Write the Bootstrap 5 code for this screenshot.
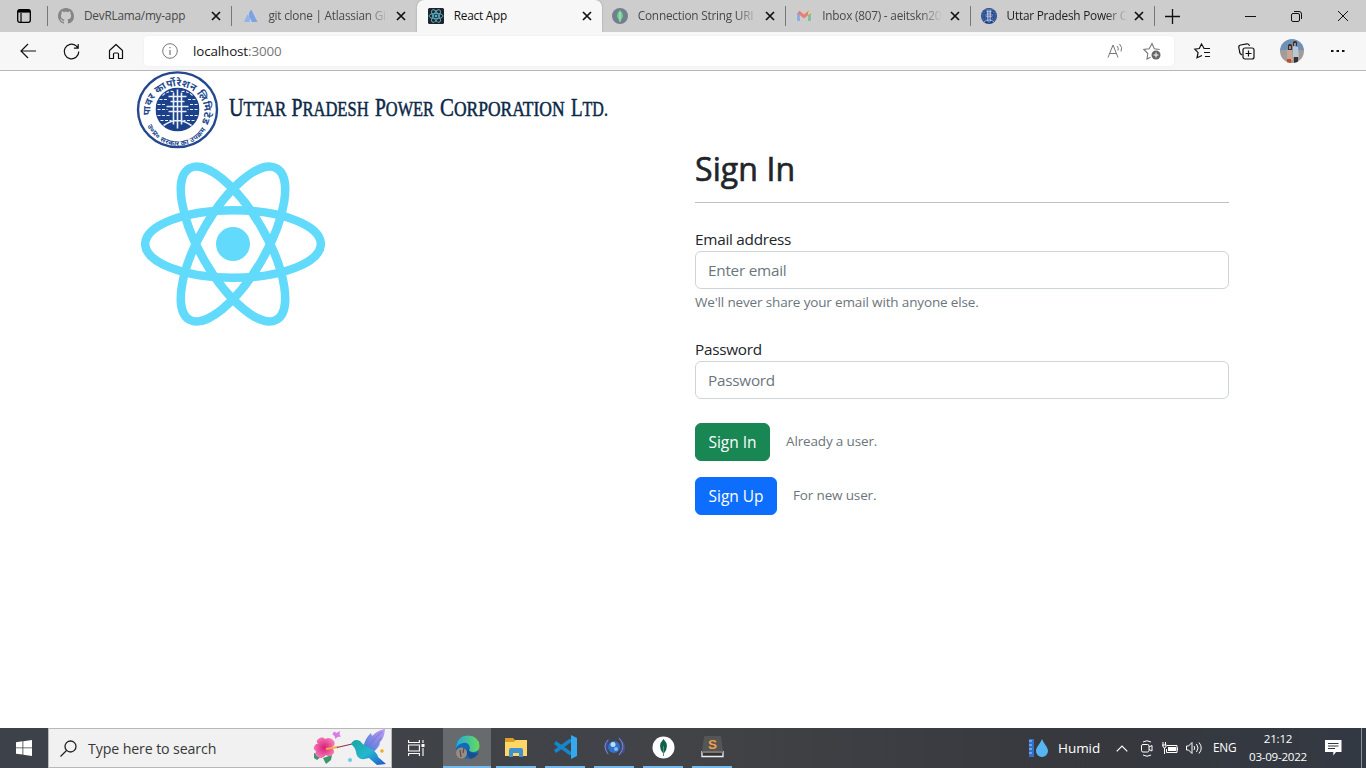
<!DOCTYPE html>
<html lang="en">
<head>
<meta charset="utf-8">
<title>React App</title>
<link href="https://cdn.jsdelivr.net/npm/bootstrap@5.3.0/dist/css/bootstrap.min.css" rel="stylesheet">
<style>
:root{--ui:"Open Sans","Noto Sans",sans-serif}
body{font-family:var(--ui);font-size:15px;height:768px;overflow:hidden;color:#212529;background:#fff}
svg{display:block;flex:none;overflow:visible}
.tabstrip{height:32px;background:#cdcdcd;font-size:11.8px;letter-spacing:-.22px;color:#494949}
.edge-start{width:47px;padding-left:17px;flex:none}
.btab{width:184.4px;flex:none;padding:0 10px 0 10px;border-left:1px solid transparent;position:relative}
.btab::before{content:"";position:absolute;left:-1px;top:6px;height:20px;width:1px;background:#777}
.btab.on::before,.btab.on + .btab::before{display:none}
.btab.on{background:#f7f7f7;color:#111;border-radius:7px 7px 0 0;width:185px;margin-left:1px;margin-right:-1px;box-shadow:0 0 2px #999;clip-path:inset(0 -3px 0 -3px)}
.btab .ttl{white-space:nowrap;overflow:hidden;margin-left:10px;width:120px;flex:none;line-height:20px;padding-bottom:2px}
.btab.fade-end .ttl{-webkit-mask-image:linear-gradient(90deg,#000 82%,transparent 100%)}
.toolbar{height:39px;background:#f7f7f7;border-bottom:1px solid #b8b8b8}
.address{width:1030px;height:30px;background:#fff;border-radius:4px;margin-left:20px;box-shadow:0 0 2px #e8e8e8;font-size:13.4px}
.page{height:657px}
.brand{height:79px}
.form-area h2{font-size:32px;line-height:38px;font-weight:500;letter-spacing:.1px;margin:0;-webkit-text-stroke:.65px}
.form-area hr{margin:14px 0 24px;opacity:.25;border-top:1px solid #000}
.form-area label{display:block;height:23.5px;line-height:24px;font-size:15.3px;letter-spacing:-.26px}
.form-area .form-control{height:38px;font-size:15.3px;letter-spacing:-.25px;border-color:#ced4da}
.form-area .form-control::placeholder{color:#6c757d}
.form-area .hint{font-size:13.5px;letter-spacing:-.15px;color:#6c757d;line-height:21px}
.form-area .btn{height:38px;font-size:15.5px;letter-spacing:-.05px;padding:7px 0 5px}
.b-in{width:75px}.b-up{width:82px}
.taskbar{height:40px;background:linear-gradient(90deg,#3d4149,#414347 50%,#36383d 80%,#333943);color:#fff}
.searchbox{width:344px;height:40px;background:#f1f1f1;border:1px solid #b9b9b9;color:#383838;font-size:14.2px;letter-spacing:-.12px}
.app{width:40px;height:40px;margin-right:9px;border-bottom:2px solid #76b9ed}
.app.current{width:48px;margin-right:5px;background:#686b6d}
.clock{font-size:11.6px;line-height:18px;letter-spacing:-.25px;width:64px}
</style>
</head>
<body>
<svg width="0" height="0" class="position-absolute">
<defs>
<symbol id="x" viewBox="0 0 10 10"><path d="M1 1l8 8M9 1L1 9" stroke="#111" stroke-width="1.7" fill="none"/></symbol>
<symbol id="atom" viewBox="-92 -82 184 164"><g fill="none" stroke="#61dafb" stroke-width="8.5"><ellipse rx="87.800" ry="33.8"/><ellipse rx="87.3" ry="33" transform="rotate(60)"/><ellipse rx="87.3" ry="33" transform="rotate(120)"/></g><circle r="17" fill="#61dafb"/></symbol>
<symbol id="emblem" viewBox="-22 -22 44 44"><circle r="22" fill="#1c418b"/>
<g fill="none" stroke="#e9eef8" stroke-width="1.6"><path d="M0-20V19M-4-17V15M4-17V15M-9-13H9M-7-8H7M-11-3H11M-9 2H9M-14 16q14-10 28 0" /><path stroke-width="1.1" stroke-dasharray="3 1.5" d="M-18-10H-9M-20-5H-11M-20 0H-10M-20 6H-8M-17 11H-6M18-10H9M20-5H11M20 0H10M20 6H8M17 11H6M-15-14q6-5 11-4M15-14q-6-5-11-4"/></g></symbol>
</defs>
</svg>

<header>
<div class="tabstrip d-flex align-items-stretch">
  <div class="edge-start d-flex align-items-center"><svg width="14" height="14" viewBox="0 0 14 14"><rect x=".7" y=".7" width="12.6" height="12.6" rx="2" fill="none" stroke="#000" stroke-width="1.3"/><path d="M1 2.200h12" stroke="#000" stroke-width="2.800"/><path d="M4 4v9" stroke="#000" stroke-width="1.200"/></svg></div>
  <div class="btab d-flex align-items-center"><svg width="16" height="16" viewBox="0 0 16 16"><path fill="#858585" d="M8 0C3.58 0 0 3.58 0 8c0 3.54 2.29 6.53 5.47 7.59.4.07.55-.17.55-.38 0-.19-.01-.82-.01-1.49-2.01.37-2.53-.49-2.69-.94-.09-.23-.48-.94-.82-1.13-.28-.15-.68-.52-.01-.53.63-.01 1.08.58 1.23.82.72 1.21 1.87.87 2.33.66.07-.52.28-.87.51-1.07-1.78-.2-3.64-.89-3.64-3.95 0-.87.31-1.59.82-2.15-.08-.2-.36-1.02.08-2.12 0 0 .67-.21 2.2.82.64-.18 1.32-.27 2-.27s1.36.09 2 .27c1.53-1.04 2.2-.82 2.2-.82.44 1.1.16 1.92.08 2.12.51.56.82 1.27.82 2.15 0 3.07-1.87 3.75-3.65 3.95.29.25.54.73.54 1.48 0 1.07-.01 1.93-.01 2.2 0 .21.15.46.55.38A8 8 0 0 0 16 8c0-4.42-3.58-8-8-8z"/></svg><span class="ttl">DevRLama/my-app</span><svg class="ms-auto" width="10" height="10"><use href="#x"/></svg></div>
  <div class="btab fade-end d-flex align-items-center"><svg width="16" height="16" viewBox="0 0 16 16"><path fill="#92b4e8" d="M6 7Q5.5 6.500 5 7L2 14h5.500Q9 11 6 7z"/><path fill="#78a3e5" d="M8.800 2Q5 7 8.500 11L10 14h5.500L9.500 2Q9.200 1.500 8.800 2z"/></svg><span class="ttl">git clone | Atlassian Gi</span><svg class="ms-auto" width="10" height="10"><use href="#x"/></svg></div>
  <div class="btab on d-flex align-items-center"><svg width="16" height="16" viewBox="0 0 16 16"><rect width="16" height="16" rx="1.500" fill="#20232a"/><g transform="translate(8 8)" fill="none" stroke="#5cb5ca" stroke-width=".9"><ellipse rx="7" ry="2.700"/><ellipse rx="7" ry="2.700" transform="rotate(60)"/><ellipse rx="7" ry="2.700" transform="rotate(120)"/><circle r="1" fill="#61dafb"/></g></svg><span class="ttl">React App</span><svg class="ms-auto" width="10" height="10"><use href="#x"/></svg></div>
  <div class="btab fade-end d-flex align-items-center"><svg width="16" height="16" viewBox="0 0 16 16"><circle cx="8" cy="8" r="8" fill="#71808a"/><path d="M8 2q6 6 0 11q-6-5 0-11z" fill="#6fce94"/><path d="M8 4v10" stroke="#b4e8c5"/></svg><span class="ttl">Connection String URI</span><svg class="ms-auto" width="10" height="10"><use href="#x"/></svg></div>
  <div class="btab fade-end d-flex align-items-center"><svg width="16" height="16" viewBox="0 0 16 16"><path fill="#8caee3" d="M1 5h3v8H2q-1 0-1-1z"/><path fill="#82c29a" d="M12 5h3v7q0 1-1 1h-2z"/><path d="M2.500 4L8 8.500 13.500 4" fill="none" stroke="#e57f78" stroke-width="3"/><path d="M12 4l2-1 1 2-3 2z" fill="#ecd282"/></svg><span class="ttl">Inbox (807) - aeitskn20</span><svg class="ms-auto" width="10" height="10"><use href="#x"/></svg></div>
  <div class="btab fade-end d-flex align-items-center" style="color:#222"><svg width="16" height="16"><use href="#emblem"/></svg><span class="ttl">Uttar Pradesh Power C</span><svg class="ms-auto" width="10" height="10"><use href="#x"/></svg></div>
  <div class="btab d-flex align-items-center" style="width:80px"><svg width="15" height="15"><path d="M7.500 0v15M0 7.500h15" stroke="#111" stroke-width="1.300"/></svg></div>
  <div class="d-flex align-items-center ms-auto" style="gap:35px;padding-right:17px"><svg width="11" height="11"><path d="M0 5.500h11" stroke="#111"/></svg><svg width="11" height="11" viewBox="0 0 11 11" fill="none" stroke="#111"><rect x=".5" y="2.500" width="8" height="8" rx="1.500"/><path d="M3 .5h5q2.500 0 2.500 2.500v5"/></svg><svg width="12" height="12"><path d="M1 1l10 10M11 1L1 11" stroke="#111"/></svg></div>
</div>
<div class="toolbar d-flex align-items-center">
  <svg width="16" height="16" style="margin-left:20px" viewBox="0 0 16 16"><path d="M16 8H1M8 1L1 8l7 7" fill="none" stroke="#111" stroke-width="1.200"/></svg>
  <svg width="17" height="17" style="margin-left:27px;margin-right:1px" viewBox="0 0 17 17"><path d="M15.800 8.500a7.300 7.300 0 1 1-2.600-5.600L15 5M15.200 1v4.200h-4.300" fill="none" stroke="#111" stroke-width="1.200"/></svg>
  <svg width="16" height="17" style="margin-left:27px" viewBox="0 0 16 17"><path d="M1.500 7.500L8 1.500l6.500 6v8h-4v-4.500q0-1-1-1h-3q-1 0-1 1v4.500h-4z" fill="none" stroke="#111" stroke-width="1.200" stroke-linejoin="round"/></svg>
  <div class="address d-flex align-items-center">
    <svg width="16" height="16" style="margin-left:18px" viewBox="0 0 16 16"><circle cx="8" cy="8" r="7.300" fill="none" stroke="#777"/><path d="M8 7v5M8 4v1.300" stroke="#777" stroke-width="1.200"/></svg>
    <span style="margin-left:15px;color:#151515;letter-spacing:-.12px">localhost<span style="color:#777">:3000</span></span>
    <svg class="ms-auto" width="17" height="16" viewBox="0 0 17 16" fill="none" stroke="#777"><path d="M1 14.500L6 2l5 12.500M2.700 10.500h6.600M10 3q2 2 1 4.500M12.500 1q3.500 3.500 1.500 7.500"/></svg>
    <svg width="18" height="18" style="margin:0 13px 0 19px" viewBox="0 0 18 18"><path d="M7.500 15.200L4 17l.8-5.500-4-4 5.400-.8L9 1.500l2.300 5.200 5.400.8" fill="none" stroke="#777" stroke-width="1.100"/><circle cx="13" cy="13" r="4.500" fill="#666"/><path d="M13 10.500v5M10.500 13h5" stroke="#fff"/></svg>
  </div>
  <svg width="17" height="16" style="margin-left:20px" viewBox="0 0 17 16" fill="none" stroke="#111" stroke-width="1.200"><path d="M10 5.200L7.500 1 5.300 5.500l-4.500.7 3.300 3.500L3 14.800l5-2.300M9.500 5.500H16M10 9.500h6M11 13.500h5"/></svg>
  <svg width="17" height="17" style="margin-left:27px" viewBox="0 0 17 17" fill="none" stroke="#111" stroke-width="1.200"><rect x="5" y="5" width="11" height="11" rx="2"/><path d="M10.500 7.500v6M7.500 10.500h6M4 12Q1.500 11 1.500 8L.8 4.500Q.5 2.500 2.500 2L9 .8q2-.3 2.500 2"/></svg>
  <svg width="24" height="24" style="margin-left:25px" viewBox="0 0 24 24"><clipPath id="av"><circle cx="12" cy="12" r="12"/></clipPath><g clip-path="url(#av)"><path fill="#6e91b5" d="M0 0h24v12H0z"/><path fill="#a19c99" d="M0 11h24v13H0z"/><path fill="#343238" d="M13 3q2-2 4 0v4h-4zM8 6q2-2 4 0v6H8zM14 17h4v7h-4z"/><path fill="#b9c6d4" d="M13 7l5 1 1 10h-6z"/><path fill="#c9a694" d="M7 11h5l1 10H7z"/><path fill="#b78769" d="M14 4h2v3h-2zM9 7h2v3H9z"/><path fill="#c34b2c" d="M7 20h4v4H7z"/></g></svg>
  <svg width="14" height="4" style="margin-left:27px"><path d="M0 2h2.500M5.500 2H8M11 2h2.500" stroke="#111" stroke-width="2.200"/></svg>
</div>
</header>

<main class="page">
<div class="container"><div class="container">
  <svg class="brand" width="480" height="79" viewBox="0 0 480 79">
    <ellipse cx="40.500" cy="38.700" rx="39.500" ry="37.300" fill="#fff" stroke="#23488f" stroke-width="2.400"/>
    <use href="#emblem" x="18.500" y="16.500" width="44" height="44"/>
    <path id="arcTop" d="M17.500 54.500A27 25.500 0 1 1 60 58" fill="none"/>
    <path id="arcBot" d="M8 47A33 33.500 0 0 0 73 47" fill="none"/>
    <g fill="#23488f" font-family="'Noto Sans Devanagari','Noto Sans',sans-serif" font-weight="700">
      <text font-size="10"><textPath href="#arcTop" startOffset="11" textLength="97">पावर कार्पोरेशन लिमिटेड</textPath></text>
      <text font-size="7"><textPath href="#arcBot" startOffset="8" textLength="72">उ०प्र० सरकार का उपक्रम</textPath></text>
    </g>
    <g fill="#0c2848" stroke="#0c2848" stroke-width=".5" font-family="'Liberation Serif',serif" font-size="21">
      <text transform="translate(92 45) scale(.82 1)" textLength="70" lengthAdjust="spacingAndGlyphs"><tspan font-size="25">U</tspan>TTAR</text>
      <text transform="translate(154.500 45) scale(.82 1)" textLength="94" lengthAdjust="spacingAndGlyphs"><tspan font-size="25">P</tspan>RADESH</text>
      <text transform="translate(238 45) scale(.82 1)" textLength="72" lengthAdjust="spacingAndGlyphs"><tspan font-size="25">P</tspan>OWER</text>
      <text transform="translate(303 45) scale(.82 1)" textLength="152" lengthAdjust="spacingAndGlyphs"><tspan font-size="25">C</tspan>ORPORATION</text>
      <text transform="translate(434 45) scale(.82 1)" textLength="45" lengthAdjust="spacingAndGlyphs"><tspan font-size="25">L</tspan>TD.</text>
    </g>
  </svg>
  <div class="row">
    <div class="col-6"><svg width="184" height="164" style="margin:12px 0 0 4px"><use href="#atom"/></svg></div>
    <div class="col-6 form-area">
      <h2>Sign In</h2>
      <hr>
      <form>
        <label for="em">Email address</label>
        <input id="em" class="form-control" type="email" placeholder="Enter email">
        <div class="hint" style="margin-top:3px">We'll never share your email with anyone else.</div>
        <label for="pw" style="margin-top:24.500px">Password</label>
        <input id="pw" class="form-control" type="password" placeholder="Password">
        <div class="d-flex align-items-center mt-4"><button type="button" class="btn btn-success b-in">Sign In</button><span class="hint ms-3">Already a user.</span></div>
        <div class="d-flex align-items-center mt-3"><button type="button" class="btn btn-primary b-up">Sign Up</button><span class="hint ms-3">For new user.</span></div>
      </form>
    </div>
  </div>
</div></div>
</main>

<footer class="taskbar d-flex align-items-center">
  <div class="d-flex justify-content-center" style="width:48px"><svg width="16" height="16" viewBox="0 0 16 16"><path fill="#fff" d="M0 2.200L6.500 1.300v6.200H0zM7.300 1.200L16 0v7.500H7.300zM0 8.300h6.500v6.300L0 13.700zM7.300 8.300H16V16l-8.700-1.200z"/></svg></div>
  <div class="searchbox d-flex align-items-center">
    <svg width="17" height="17" style="margin-left:11px" viewBox="0 0 17 17" fill="none" stroke="#222" stroke-width="1.300"><circle cx="10.500" cy="6.500" r="5.500"/><path d="M6.500 10.500L.5 16.500"/></svg>
    <span style="margin-left:11px;padding-top:2px">Type here to search</span>
    <svg class="ms-auto" width="76" height="38" style="margin-right:1px" viewBox="0 0 76 38">
      <defs><linearGradient id="bd" x1="0" x2="1" y1="0" y2="1"><stop stop-color="#17a6a0"/><stop offset=".5" stop-color="#25b7cf"/><stop offset="1" stop-color="#1c55ce"/></linearGradient><linearGradient id="wg" x1="1" x2="0" y1="0" y2="1"><stop stop-color="#c39af1"/><stop offset="1" stop-color="#397ad8"/></linearGradient><radialGradient id="fl"><stop stop-color="#d81f78"/><stop offset="1" stop-color="#f576b4"/></radialGradient></defs>
      <path fill="#38976b" d="M0 24l8 3-5 4-3-2zM9 29l9-3-1 5-5 4z"/>
      <path fill="url(#fl)" d="M3 11q5-5 8-1 5-3 9 2 2 4-2 6 4 5 0 8-4 2-6 0-4 5-8 2-4-2-2-6-4-2-1-6 2-2 4-1-3-1-2-4z"/><path d="M12 20l12-2" stroke="#f7ad3a" stroke-width="1.800"/>
      <path fill="#d87be8" d="M20 2.500l2.500 1.500L26 2l-.5 3.500 1.500 2-3.500.500-2 2-1-3-2-1.500z"/>
      <path d="M23 18.500L38 15" stroke="#8d315a" stroke-width="1.200"/>
      <path fill="url(#wg)" d="M49 19Q51 9 57 4l1 3q6-6 13-7-1 10-5 13 0 5-8 11z"/><path d="M55 17Q61 8 68 3M58 20Q64 15 67 9" stroke="#8670dc" fill="none"/>
      <path fill="url(#bd)" d="M37 15Q40 9 46 12q4 5 10 7 7 4 8 9l8 7-9 1-8-7Q43 33 42 23q-1-5-5-8z"/>
      <circle cx="36" cy="31" r="2" fill="#69cce8"/><circle cx="68" cy="22" r="1.800" fill="#f4ae22"/>
    </svg>
  </div>
  <div class="d-flex justify-content-center" style="width:51px;padding-right:3px"><svg width="17" height="16" viewBox="0 0 17 16" fill="none" stroke="#fff" stroke-width="1.100"><path d="M.6 0v2.500h10.800V0M.6 16v-2.500h10.800V16M.6 5h10.800v6H.6zM15 0v3M15 8v8"/><path d="M13.500 5.500h3" stroke-width="3"/></svg></div>
  <div class="app current d-flex align-items-center justify-content-center"><svg width="25" height="25" viewBox="0 0 25 25"><defs><linearGradient id="eg"><stop stop-color="#25a6e1"/><stop offset="1" stop-color="#66dc58"/></linearGradient></defs><circle cx="12.500" cy="12" r="11.500" fill="#116bb6"/><path d="M1 13Q2 .5 13 .5 24 1 24.500 11q0 6-7 6-5-1-2.500-4Q14 7 8 8q-5 1-7 5z" fill="url(#eg)"/><path d="M14 13q-2 4 4 5 4 1 6-1-3 6-9 7-6-7-1-11z" fill="#184f92"/><circle cx="6.500" cy="18" r="5.500" fill="#9a8b83"/><path d="M5 15l1 7M9 13l-1 5" stroke="#5b5050" stroke-width="1.300"/></svg></div>
  <div class="app d-flex align-items-center justify-content-center"><svg width="22" height="19" viewBox="0 0 22 19"><path fill="#d9a226" d="M0 0h8l2 2h11v5H0z"/><path fill="#ffd766" d="M0 4h9l2-2h11v16H0z"/><path fill="#3f91cf" d="M4 19v-7q0-2 2-2h10q2 0 2 2v7h-4v-4H8v4z"/></svg></div>
  <div class="app d-flex align-items-center justify-content-center"><svg width="24" height="24" viewBox="0 0 24 24"><path d="M18 5L2 16.500M18 19L2 7.500" stroke="#1686ca" stroke-width="3.600"/><path fill="#35a8ee" d="M18 0l6 3v18l-6 3z"/></svg></div>
  <div class="app d-flex align-items-center justify-content-center"><svg width="24" height="24" viewBox="0 0 24 24" fill="none"><path d="M8 3Q0 7 3 15l5 7Q3 14 8 3zM16 2q6 9 0 19 9-3 7-11Q21 5 16 2z" fill="#404c93"/><path d="M6 5Q0 11 6 19M17 3q8 8 0 17" stroke="#8e9cc9" stroke-width=".8"/><circle cx="12" cy="12" r="6" fill="#3071c9"/><circle cx="11" cy="9.500" r="2.500" fill="#b9dcf8"/><circle cx="14" cy="14" r="2" fill="#83b9ee"/></svg></div>
  <div class="app d-flex align-items-center justify-content-center"><svg width="23" height="23" viewBox="0 0 23 23"><circle cx="11.500" cy="11.500" r="11" fill="#fff"/><path d="M11.500 3q7 7 0 15-7-8 0-15z" fill="#116149"/><path d="M11.500 10v10" stroke="#489672"/></svg></div>
  <div class="app d-flex align-items-center justify-content-center"><svg width="23" height="22" viewBox="0 0 23 22"><path d="M1 15v5.500h21V15" fill="#333" stroke="#eee" stroke-width="1.300"/><path d="M3 1q0-1 1-1h15q1 0 1 1l2 14q0 2-2 2H3q-2 0-2-2z" fill="#555"/><path d="M2 16h19" stroke="#999"/><text x="11.500" y="12.500" text-anchor="middle" font-family="Liberation Sans" font-weight="700" font-size="13.500" fill="#f2a04c">S</text></svg></div>
  <div class="d-flex align-items-center ms-auto h-100">
    <svg width="20" height="18" viewBox="0 0 20 18"><path d="M0 0h5v18H0z" fill="#3270ce"/><path d="M0 2h3M0 6h3M0 10h3M0 14h3" stroke="#b0d7ff"/><path d="M13 0c2 5 6 8 6 12a6 6 0 0 1-12 0c0-4 4-7 6-12z" fill="#57b4f2"/></svg>
    <span style="margin-left:9px;font-size:13.500px;letter-spacing:-.05px;width:57px;padding-top:1px">Humid</span>
    <svg width="12" height="7" style="margin-left:1px"><path d="M.7 6.300L6 1l5.300 5.300" stroke="#fff" fill="none" stroke-width="1.200"/></svg>
    <svg width="12" height="17" style="margin-left:13px" viewBox="0 0 12 17" fill="none" stroke="#fff"><rect x=".5" y="4.500" width="7.500" height="7.500" rx="1.500"/><path d="M8 7l3-1.500V11L8 9.500M2 2q4-2.500 8 0M2 15q4 2.500 8 0"/></svg>
    <svg width="16" height="13" style="margin-left:9px" viewBox="0 0 16 13"><path d="M5 3.500h10v7H4.500V7M15.500 5.500v3M0 3h4.500M1 0v3M3.500 0v3M1 3v2q2 2 3 0V3M2.500 6v6" stroke="#fff" fill="none"/><path d="M6 5h8v4H6z" fill="#fff"/></svg>
    <svg width="17" height="14" style="margin-left:8px" viewBox="0 0 17 14" fill="none" stroke="#fff"><path d="M.5 5h2L6 1.500v11L2.500 9h-2zM8 5q1.500 2 0 4M10.500 3q3 4 0 8M13 1.500q4.500 5.500 0 11"/></svg>
    <span style="margin-left:10px;font-size:11.800px;letter-spacing:-.2px;width:24px">ENG</span>
    <div class="clock text-center" style="margin-left:9px;padding-bottom:1px">21:12<br>03-09-2022</div>
    <svg width="17" height="16" style="margin-left:15px" viewBox="0 0 17 16"><path fill="#fff" d="M0 0h16.500v12H11l-2.700 3.500V12H0z"/><path d="M3 3.500h10.500M3 6h10.500M3 8.500h7" stroke="#333943"/></svg>
    <div class="h-100" style="width:20px;border-right:1px solid #888e96;margin-right:4px"></div>
  </div>
</footer>
<script src="https://cdn.jsdelivr.net/npm/bootstrap@5.3.0/dist/js/bootstrap.bundle.min.js"></script>
</body>
</html>
